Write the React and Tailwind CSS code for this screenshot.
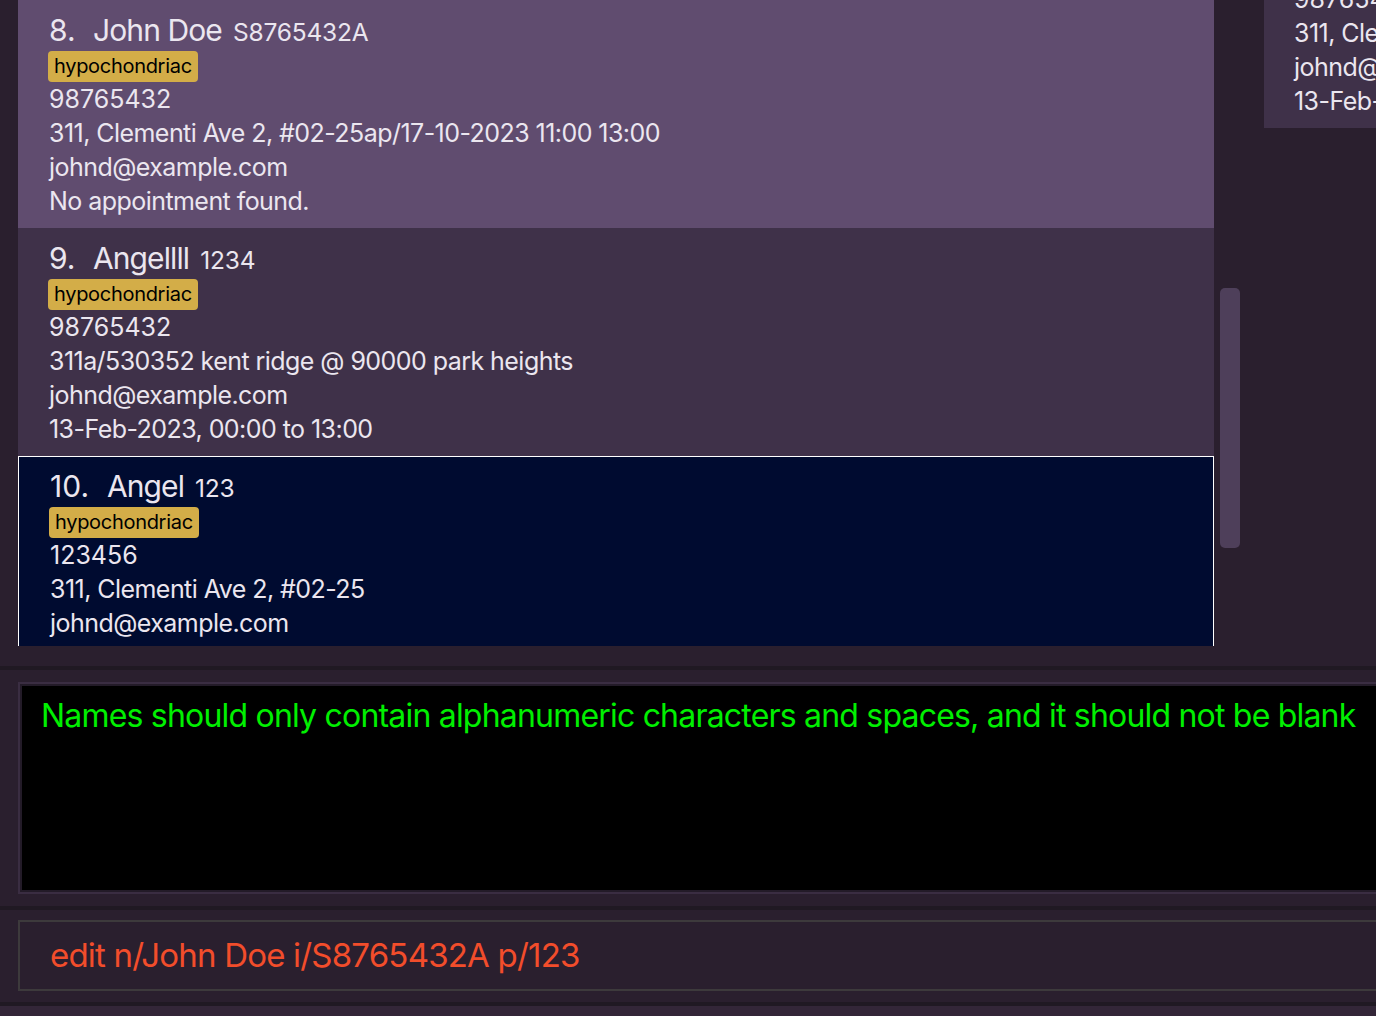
const persons = [
  {
    index: 8,
    name: 'John Doe',
    nric: 'S8765432A',
    tag: 'hypochondriac',
    phone: '98765432',
    address: '311, Clementi Ave 2, #02-25ap/17-10-2023 11:00 13:00',
    email: 'johnd@example.com',
    appointment: 'No appointment found.',
    tone: 'light',
  },
  {
    index: 9,
    name: 'Angellll',
    nric: '1234',
    tag: 'hypochondriac',
    phone: '98765432',
    address: '311a/530352 kent ridge @ 90000 park heights',
    email: 'johnd@example.com',
    appointment: '13-Feb-2023, 00:00 to 13:00',
    tone: 'dark',
  },
  {
    index: 10,
    name: 'Angel',
    nric: '123',
    tag: 'hypochondriac',
    phone: '123456',
    address: '311, Clementi Ave 2, #02-25',
    email: 'johnd@example.com',
    appointment: '',
    tone: 'selected',
  },
];

function PersonCard({ person }) {
  const toneClass =
    person.tone === 'selected'
      ? 'bg-[#000b30] border border-white pl-[31px] pt-[9px]'
      : person.tone === 'light'
        ? 'bg-[#604c6f] pl-[31px] pt-[10px]'
        : 'bg-[#3f3149] pl-[31px] pt-[10px]';

  return (
    <div className={`shrink-0 h-[228px] pb-[10px] text-[#ebe6ef] ${toneClass}`}>
      <div className="flex items-baseline h-[40px] leading-[40px]">
        <span className="text-[30px] w-[44px] shrink-0">{person.index}.</span>
        <span
          className="text-[30px] tracking-[-0.9px]"
          style={{ marginLeft: person.index >= 10 ? 13 : 0 }}
        >
          {person.name}
        </span>
        <span className="text-[24.5px] ml-[11px] tracking-[-0.2px]">{person.nric}</span>
      </div>
      <div className="flex mt-[1px] -ml-[1px]">
        <span className="h-[31px] leading-[31px] px-[6px] rounded-[4px] bg-[#d3ad48] text-black text-[20px] tracking-[-0.3px]">
          {person.tag}
        </span>
      </div>
      <div className="text-[25px] leading-[34px] tracking-[-0.55px]">
        <div className="tracking-normal">{person.phone}</div>
        <div>{person.address}</div>
        <div>{person.email}</div>
        {person.appointment && <div>{person.appointment}</div>}
      </div>
    </div>
  );
}

export default function App() {
  return (
    <div
      className="w-[1376px] h-[1016px] overflow-hidden bg-[#2a1f2e] flex flex-col"
      style={{ fontFamily: 'Inter, "Noto Sans", sans-serif' }}
    >
      {/* list + side panel */}
      <div className="h-[666px] shrink-0 flex pl-[18px]">
        <div className="w-[1196px] h-[646px] shrink-0 overflow-hidden flex flex-col">
          {persons.map((p) => (
            <PersonCard key={p.index} person={p} />
          ))}
        </div>
        <div className="w-[20px] shrink-0 ml-[6px] pt-[288px]">
          <div className="h-[260px] rounded-[5px] bg-[#4e3f5a]" />
        </div>
        <div className="ml-[24px] w-[400px] shrink-0">
          <div className="h-[128px] bg-[#3f3149] overflow-hidden flex flex-col justify-end pl-[30px] pb-[10px] text-[25px] leading-[34px] tracking-[-0.55px] text-[#ebe6ef] whitespace-nowrap">
            <div className="tracking-normal">98765432</div>
            <div>311, Clementi Ave 2, #02-25</div>
            <div>johnd@example.com</div>
            <div>13-Feb-2023, 00:00 to 13:00</div>
          </div>
        </div>
      </div>

      <div className="h-[4px] shrink-0 bg-[#201923]" />

      {/* result display */}
      <div className="h-[236px] shrink-0 pt-[12px] pb-[12px] pl-[18px]">
        <div className="w-[1400px] h-full bg-[#3a2d42] p-[2px]">
          <div className="h-full bg-black border-2 border-[#231b28] pl-[19px] pt-[10px]">
            <div className="text-[#00f000] text-[32px] leading-[40px] tracking-[-0.8px] whitespace-nowrap">
              Names should only contain alphanumeric characters and spaces, and it should not be blank
            </div>
          </div>
        </div>
      </div>

      <div className="h-[4px] shrink-0 bg-[#201923]" />

      {/* command box */}
      <div className="h-[92px] shrink-0 pt-[10px] pl-[18px]">
        <div className="w-[1400px] h-[71px] border-2 border-[#3d3a3c] flex items-center pl-[30px]">
          <span className="text-[#f24d2b] text-[33px] tracking-[-0.8px] whitespace-nowrap">
            edit n/John Doe i/S8765432A p/123
          </span>
        </div>
      </div>

      <div className="h-[4px] shrink-0 bg-[#201923]" />
      <div className="flex-1 bg-[#332638]" />
    </div>
  );
}
